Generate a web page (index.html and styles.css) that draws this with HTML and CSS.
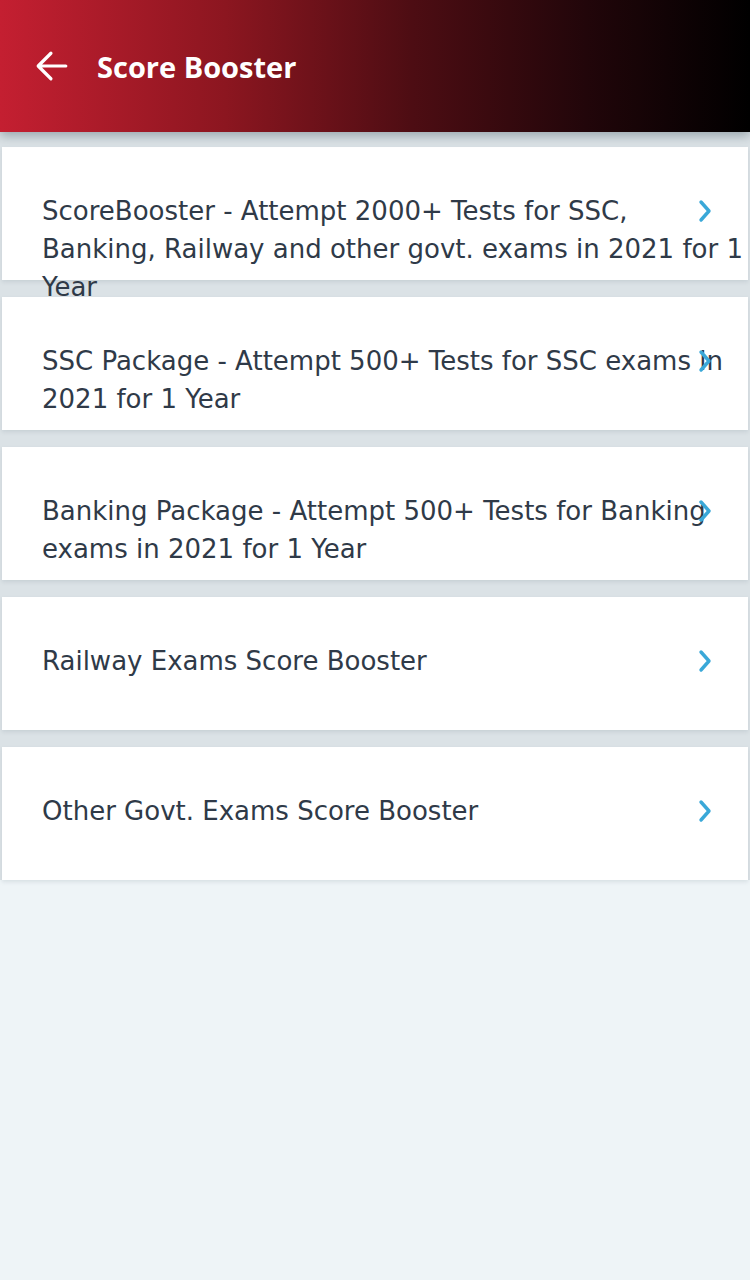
FILE: index.html
```html
<!DOCTYPE html>
<html lang="en">
<head>
    <meta charset="UTF-8">
    <meta name="viewport" content="width=device-width, initial-scale=1.0">
    <title>Score Booster</title>
    <link rel="stylesheet" href="styles.css">
</head>
<body>
    <header class="app-bar">
        <svg class="back-icon" viewBox="0 0 32 32" width="34" height="34">
            <path d="M29 16H4M15 4L3 16l12 12" fill="none" stroke="#fff" stroke-width="3" stroke-linecap="round" stroke-linejoin="round"/>
        </svg>
        <h1 class="app-title">Score Booster</h1>
    </header>

    <main class="package-list">
        <div class="package-card">
            <p class="package-name">ScoreBooster - Attempt 2000+ Tests for SSC, Banking, Railway and other govt. exams in 2021 for 1 Year</p>
            <svg class="chevron" viewBox="0 0 16 24" width="16" height="24"><path d="M4 3l8 9-8 9" fill="none" stroke="#3aa8d8" stroke-width="3.4" stroke-linecap="round" stroke-linejoin="round"/></svg>
        </div>
        <div class="package-card">
            <p class="package-name">SSC Package - Attempt 500+ Tests for SSC exams in 2021 for 1 Year</p>
            <svg class="chevron" viewBox="0 0 16 24" width="16" height="24"><path d="M4 3l8 9-8 9" fill="none" stroke="#3aa8d8" stroke-width="3.4" stroke-linecap="round" stroke-linejoin="round"/></svg>
        </div>
        <div class="package-card">
            <p class="package-name">Banking Package - Attempt 500+ Tests for Banking exams in 2021 for 1 Year</p>
            <svg class="chevron" viewBox="0 0 16 24" width="16" height="24"><path d="M4 3l8 9-8 9" fill="none" stroke="#3aa8d8" stroke-width="3.4" stroke-linecap="round" stroke-linejoin="round"/></svg>
        </div>
        <div class="package-card">
            <p class="package-name">Railway Exams Score Booster</p>
            <svg class="chevron" viewBox="0 0 16 24" width="16" height="24"><path d="M4 3l8 9-8 9" fill="none" stroke="#3aa8d8" stroke-width="3.4" stroke-linecap="round" stroke-linejoin="round"/></svg>
        </div>
        <div class="package-card">
            <p class="package-name">Other Govt. Exams Score Booster</p>
            <svg class="chevron" viewBox="0 0 16 24" width="16" height="24"><path d="M4 3l8 9-8 9" fill="none" stroke="#3aa8d8" stroke-width="3.4" stroke-linecap="round" stroke-linejoin="round"/></svg>
        </div>
    </main>
</body>
</html>
```

FILE: styles.css
```css
/* Base */
body {
    margin: 0;
    font-family: "DejaVu Sans", sans-serif;
    background-color: #eef4f7;
    color: #2f3a48;
    min-height: 1280px;
}

/* Top bar */
.app-bar {
    position: relative;
    z-index: 2;
    height: 132px;
    display: flex;
    align-items: center;
    padding-left: 35px;
    box-sizing: border-box;
    background: linear-gradient(to right, #c41f31 0%, #8c1620 30%, #4d0d13 55%, #22060a 78%, #000000 100%);
    box-shadow: 0 4px 10px rgba(60, 80, 90, 0.4);
}

.back-icon {
    display: block;
}

.app-title {
    margin: 0 0 0 28px;
    font-family: "Open Sans", sans-serif;
    color: #ffffff;
    font-size: 29px;
    font-weight: 700;
}

/* Package list */
.package-list {
    background-color: #dbe2e6;
    padding: 15px 2px 0 2px;
    display: flex;
    flex-direction: column;
    gap: 17px;
}

.package-card {
    position: relative;
    height: 133px;
    background-color: #ffffff;
    box-shadow: 0 2px 4px rgba(90, 110, 120, 0.15);
}

.package-name {
    margin: 0;
    padding: 45px 0 0 40px;
    font-size: 26px;
    line-height: 38px;
    color: #2f3a48;
}

.chevron {
    position: absolute;
    top: 52px;
    left: 695px;
}
```
